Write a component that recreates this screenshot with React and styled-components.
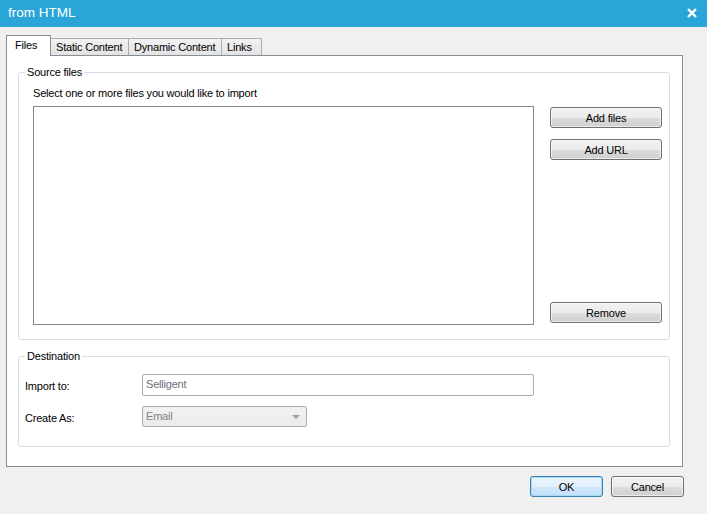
import React from "react";
import styled, { createGlobalStyle } from "styled-components";

const GlobalStyle = createGlobalStyle`
  html, body {
    margin: 0;
    padding: 0;
    background: #f0f0f0;
  }
  body {
    font-family: "Liberation Sans", Arial, sans-serif;
    font-size: 11px;
    letter-spacing: -0.2px;
    color: #000;
  }
`;

const tabs = [
  { label: "Files", width: 45 },
  { label: "Static Content", width: 78 },
  { label: "Dynamic Content", width: 93 },
  { label: "Links", width: 40 },
];

function App() {
  return (
    <Window>
      <GlobalStyle />
      <TitleBar>
        <Title>from HTML</Title>
        <Close>
          <svg width="10" height="10" viewBox="0 0 10 10">
            <path d="M1 1 L9 9 M9 1 L1 9" stroke="#fff" strokeWidth="2.4" />
          </svg>
        </Close>
      </TitleBar>
      <Body>
        <TabRow>
          {tabs.map((t, i) => (
            <Tab key={t.label} $active={i === 0} $width={t.width}>
              {t.label}
            </Tab>
          ))}
        </TabRow>
        <Panel>
          <SourceGroup>
            <Legend $shift={-8}>Source files</Legend>
            <SourceGrid>
              <Hint>Select one or more files you would like to import</Hint>
              <FileList />
              <ButtonColumn>
                <Button>Add files</Button>
                <Button>Add URL</Button>
                <Button $push>Remove</Button>
              </ButtonColumn>
            </SourceGrid>
          </SourceGroup>
          <DestGroup>
            <Legend $shift={0}>Destination</Legend>
            <FormGrid>
              <Label>Import to:</Label>
              <TextBox>Selligent</TextBox>
              <Label>Create As:</Label>
              <SelectBox>
                <span>Email</span>
                <Arrow />
              </SelectBox>
            </FormGrid>
          </DestGroup>
        </Panel>
        <Footer>
          <Button $default $w={73}>OK</Button>
          <Button $w={73}>Cancel</Button>
        </Footer>
      </Body>
    </Window>
  );
}

const Window = styled.div`
  width: 707px;
  height: 514px;
  display: flex;
  flex-direction: column;
  background: #f0f0f0;
  overflow: hidden;
`;

const TitleBar = styled.div`
  height: 27px;
  background: #2aa5d7;
  display: flex;
  align-items: center;
  justify-content: space-between;
  padding: 0 10px 0 8px;
  flex-shrink: 0;
`;

const Title = styled.div`
  color: #fff;
  font-size: 13.5px;
  letter-spacing: 0;
  padding-bottom: 2px;
`;

const Close = styled.div`
  display: flex;
  align-items: center;
  padding-bottom: 2px;
`;

const Body = styled.div`
  padding: 8px 0 0 6px;
  display: flex;
  flex-direction: column;
`;

const TabRow = styled.div`
  display: flex;
  align-items: flex-end;
  height: 21px;
  margin-bottom: -1px;
`;

const Tab = styled.div`
  box-sizing: border-box;
  width: ${(p) => p.$width}px;
  height: ${(p) => (p.$active ? 21 : 17)}px;
  margin-bottom: ${(p) => (p.$active ? 0 : 1)}px;
  border: 1px solid ${(p) => (p.$active ? "#898c95" : "#acacac")};
  border-bottom: none;
  border-left-width: ${(p) => (p.$active ? 1 : 0)}px;
  background: ${(p) =>
    p.$active ? "#fff" : "linear-gradient(#f2f2f2, #e3e3e3)"};
  position: relative;
  z-index: ${(p) => (p.$active ? 1 : 0)};
  display: flex;
  align-items: center;
  padding-left: ${(p) => (p.$active ? 8 : 5)}px;
  padding-bottom: ${(p) => (p.$active ? 2 : 0)}px;
  white-space: nowrap;
`;

const Panel = styled.div`
  box-sizing: border-box;
  width: 677px;
  height: 412px;
  border: 1px solid #898c95;
  background: #fff;
  padding: 9px 12px 0 11px;
  display: flex;
  flex-direction: column;
`;

const Group = styled.fieldset`
  margin: 0;
  border: 1px solid #d5dfe5;
  border-radius: 3px;
  min-width: 0;
`;

const SourceGroup = styled(Group)`
  padding: 7px 8px 14px 14px;
`;

const DestGroup = styled(Group)`
  margin-top: 9px;
  padding: 11px 8px 19px 6px;
`;

const Legend = styled.legend`
  padding: 0 2px;
  margin-left: ${(p) => p.$shift}px;
  line-height: 14px;
`;

const SourceGrid = styled.div`
  display: grid;
  grid-template-columns: 501px 112px;
  grid-template-rows: auto 219px;
  column-gap: 16px;
  row-gap: 6px;
`;

const Hint = styled.div`
  grid-column: 1 / span 2;
  line-height: 14px;
`;

const FileList = styled.div`
  box-sizing: border-box;
  border: 1px solid #828790;
  background: #fff;
`;

const ButtonColumn = styled.div`
  display: flex;
  flex-direction: column;
  gap: 11px;
  padding: 1px 0 2px;
`;

const Button = styled.div`
  box-sizing: border-box;
  width: ${(p) => (p.$w ? `${p.$w}px` : "100%")};
  height: 21px;
  margin-top: ${(p) => (p.$push ? "auto" : 0)};
  border: 1px solid ${(p) => (p.$default ? "#3c7fb1" : "#707070")};
  border-radius: 3px;
  background: ${(p) =>
    p.$default
      ? "linear-gradient(#eaf5fd 0%, #e2f0fc 50%, #cfe6fa 51%, #c4e0f8 100%)"
      : "linear-gradient(#f2f2f2 0%, #ebebeb 50%, #dddddd 51%, #cfcfcf 100%)"};
  box-shadow: inset 0 0 0 1px
    ${(p) => (p.$default ? "rgba(160, 215, 245, 0.9)" : "rgba(255, 255, 255, 0.6)")};
  display: flex;
  align-items: center;
  justify-content: center;
`;

const FormGrid = styled.div`
  display: grid;
  grid-template-columns: 117px auto;
  grid-template-rows: 22px 21px;
  row-gap: 10px;
  align-items: center;
  justify-items: start;
`;

const Label = styled.div`
  padding-top: 2px;
`;

const TextBox = styled.div`
  box-sizing: border-box;
  width: 392px;
  height: 22px;
  border: 1px solid #abadb3;
  border-radius: 2px;
  background: #fff;
  color: #6d6d78;
  display: flex;
  align-items: center;
  padding: 0 0 3px 3px;
`;

const SelectBox = styled.div`
  box-sizing: border-box;
  width: 165px;
  height: 21px;
  border: 1px solid #adadad;
  border-radius: 2px;
  background: linear-gradient(#f2f2f2, #ebebeb);
  color: #838383;
  display: flex;
  align-items: center;
  justify-content: space-between;
  padding: 0 6px 2px 3px;
`;

const Arrow = styled.div`
  width: 0;
  height: 0;
  border-left: 4px solid transparent;
  border-right: 4px solid transparent;
  border-top: 4px solid #a0a0a0;
  margin-top: 2px;
`;

const Footer = styled.div`
  display: flex;
  justify-content: flex-end;
  gap: 8px;
  padding: 9px 23px 0 0;
`;

export default App;
